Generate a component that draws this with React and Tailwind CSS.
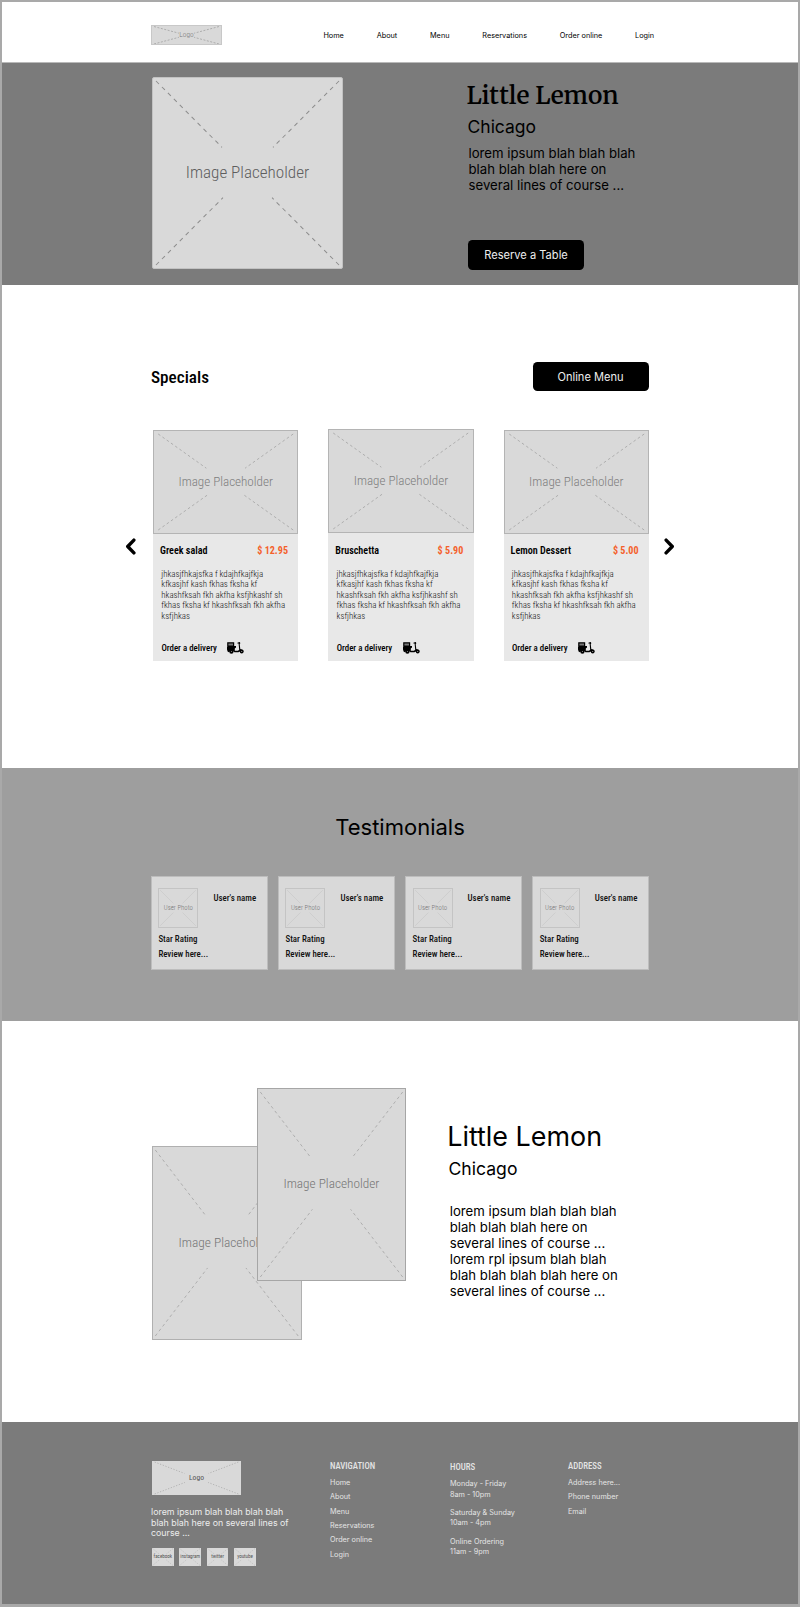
const NAV = ["Home", "About", "Menu", "Reservations", "Order online", "Login"];
const SPECIALS = [
  { name: "Greek salad", price: "$ 12.95", offset: "mt-px h-[231px]", head: "mt-[11px]" },
  { name: "Bruschetta", price: "$ 5.90", offset: "h-[232px]", head: "mt-[12px]" },
  { name: "Lemon Dessert", price: "$ 5.00", offset: "mt-px h-[231px]", head: "mt-[11px]" },
];
const DESCRIPTION = [
  "jhkasjfhkajsfka f kdajhfkajfkja",
  "kfkasjhf kash fkhas fksha kf",
  "hkashfksah fkh akfha ksfjhkashf sh",
  "fkhas fksha kf hkashfksah fkh akfha",
  "ksfjhkas",
];
const HOURS = [
  ["Monday - Friday", "8am - 10pm"],
  ["Saturday & Sunday", "10am - 4pm"],
  ["Online Ordering", "11am - 9pm"],
];

/* Grey box with dashed diagonals that break around a centred label. */
function Placeholder({ label, w, h, className = "", text = "", stroke = "#a2a2a2", dash = "3 3", from = 0.365, to = 0.63, sw = 0.8 }) {
  const i = Math.min(3, h * 0.03);
  const x = i * (w / h);
  return (
    <div className={`grid shrink-0 place-items-center overflow-hidden bg-[#d9d9d9] ${className}`}>
      <svg viewBox={`0 0 ${w} ${h}`} preserveAspectRatio="none" className="col-start-1 row-start-1 h-full w-full" fill="none" stroke={stroke} strokeWidth={sw} strokeDasharray={dash}>
        <path d={`M${x} ${i}L${w * from} ${h * from}M${w - x} ${i}L${w * (1 - from)} ${h * from}M${x} ${h - i}L${w * (1 - to)} ${h * to}M${w - x} ${h - i}L${w * to} ${h * to}`} />
      </svg>
      <span className={`z-10 col-start-1 row-start-1 whitespace-nowrap font-['Roboto',sans-serif] font-stretch-condensed ${text}`}>{label}</span>
    </div>
  );
}

function Button({ children, className = "" }) {
  return (
    <button className={`flex h-[29.5px] w-[116px] items-center justify-center rounded-[4.5px] bg-black text-[11.1px] leading-none text-[#eeeeee] ${className}`}>
      {children}
    </button>
  );
}

function Arrow({ className }) {
  return (
    <svg viewBox="0 0 10 16" className={`h-[17px] w-[11px] shrink-0 ${className}`} fill="none" stroke="#000" strokeWidth="3.2" strokeLinejoin="round" strokeLinecap="round">
      <path d="M8.2 2L2.4 8L8.2 14" />
    </svg>
  );
}

function Scooter() {
  return (
    <svg viewBox="0 0 17 12" className="h-3 w-[17px]">
      <path d="M.8 .8H6.6V4H.8Z" fill="#777" stroke="#000" strokeWidth="1.2" />
      <path d="M0 5.2Q0 4 1.2 4H9V5.6L7.8 6.4V8.8H11L12.2 7.8L11.6 1.4L10.4 1.6V.8L12.4 0Q13.2 0 13.2 1V1.8L12.7 2L13.3 7Q16 7.2 16.8 9.2L13 9.4L11.4 10.2H7.4L6.6 9.2H2.6L1.6 10.2L.6 9.4L0 7.6Z" />
      <circle cx="4.4" cy="9.5" r="2.2" />
      <circle cx="14.7" cy="9.5" r="1.9" />
      <circle cx="4.4" cy="9.5" r=".5" fill="#aaa" />
      <circle cx="14.7" cy="9.5" r=".6" fill="#aaa" />
    </svg>
  );
}

function SpecialCard({ name, price, offset, head }) {
  return (
    <article className={`w-[145.4px] bg-[#e8e8e8] font-['Roboto',sans-serif] font-stretch-condensed ${offset}`}>
      <Placeholder label="Image Placeholder" w={143} h={102} dash="2.6 2.6" className="h-[104px] w-full border border-[#b4b4b4]" text="text-[13.1px] font-light text-[#7d7d7d]" />
      <div className={`flex justify-between pr-[10.4px] pl-[7px] text-[10.1px] leading-3 font-semibold ${head}`}>
        <h3>{name}</h3>
        <span className="font-bold text-[#f4612c]">{price}</span>
      </div>
      <p className="mt-[11.5px] pl-[8.3px] text-[8.9px] leading-[10.5px] font-light whitespace-nowrap text-[#111111]">
        {DESCRIPTION.map((line) => <span key={line} className="block">{line}</span>)}
      </p>
      <div className="mt-[21px] flex items-center gap-[10.5px] pl-[8.4px] text-[8.9px] leading-3 font-medium">
        <span>Order a delivery</span>
        <Scooter />
      </div>
    </article>
  );
}

function Review() {
  return (
    <article className="h-[93.5px] w-[116.6px] border border-[#bdbdbd] bg-[#d9d9d9] pt-[11px] pl-[6.4px] font-['Roboto',sans-serif] text-[8.9px] leading-3 font-medium font-stretch-condensed text-[#111111]">
      <div className="flex">
        <Placeholder label="User Photo" w={38} h={38} from={0.38} to={0.62} dash="none" stroke="#cccccc" className="size-10 border border-[#c4c4c4]" text="text-[6.8px] font-light text-[#777777]" />
        <span className="ml-[15px] pt-[3.5px]">User's name</span>
      </div>
      <p className="mt-[5px]">Star Rating</p>
      <p className="mt-[3px]">Review here...</p>
    </article>
  );
}

function FooterTitle({ children }) {
  return <h3 className="text-[8.8px] leading-3 font-medium font-['Roboto',sans-serif] font-stretch-condensed">{children}</h3>;
}

export default function App() {
  return (
    <div className="flex h-[1607px] w-[800px] flex-col border-2 border-b-3 border-[#a9a9a9] bg-white font-['Inter',sans-serif] text-black">
      <header className="flex h-[61px] shrink-0 border-b border-[#b9b9b9] pl-[149px]">
        <Placeholder label="Logo" w={69} h={18} from={0.39} to={0.61} dash="2 1.5" className="mt-[22.5px] h-[20.5px] w-[71px] border border-[#c8c8c8]" text="text-[7.4px] leading-none font-light text-[#777777]" />
        <nav className="mt-[27.6px] ml-[101.4px] flex gap-[32.8px] text-[7.3px] leading-3">
          {NAV.map((item) => <a key={item}>{item}</a>)}
        </nav>
      </header>

      <section className="flex h-[222px] shrink-0 bg-[#7b7b7b] pl-[150px]">
        <Placeholder label="Image Placeholder" w={189} h={189} dash="4.2 4.2" stroke="#8c8c8c" sw={1} className="mt-[14px] h-[192px] w-[191px] rounded-xs border border-[#c2c2c2]" text="text-[17.1px] font-light text-[#5e5e5e]" />
        <div className="ml-[123.5px]">
          <h1 className="mt-[20px] text-[24.4px] leading-[26px] font-semibold font-['Merriweather',serif]">Little Lemon</h1>
          <h2 className="mt-[6.8px] pl-px text-[17.5px] leading-[22px]">Chicago</h2>
          <p className="mt-[7px] pl-[2px] text-[13.2px] leading-4">
            lorem ipsum blah blah blah<br />blah blah blah here on<br />several lines of course ...
          </p>
          <Button className="mt-[47.3px] ml-[1.5px] pt-[1.5px]">Reserve a Table</Button>
        </div>
      </section>

      <section className="h-[482.5px] shrink-0 pt-[76.5px]">
        <div className="flex items-center justify-between pr-[149.5px] pl-[149px]">
          <h2 className="pt-px text-[17.2px] leading-5 font-medium font-['Roboto',sans-serif] font-stretch-condensed">Specials</h2>
          <Button className="pt-[3px]">Online Menu</Button>
        </div>
        <div className="mt-[38px] flex items-start pl-[123px]">
          <Arrow className="mt-[108.6px] mr-[17px]" />
          <div className="flex items-start gap-[29.9px]">
            {SPECIALS.map((s) => <SpecialCard key={s.name} {...s} />)}
          </div>
          <Arrow className="mt-[108.6px] ml-[15px] -scale-x-100" />
        </div>
      </section>

      <section className="h-[253px] shrink-0 bg-[#9e9e9e] pt-[45.5px]">
        <h2 className="text-center text-[22px] leading-7">Testimonials</h2>
        <div className="mt-[35px] flex gap-[10.5px] pl-[149px]">
          {[0, 1, 2, 3].map((n) => <Review key={n} />)}
        </div>
      </section>

      <section className="flex h-[401px] shrink-0 pl-[150px]">
        <div className="mt-[67px] flex h-[252px] w-[254px] items-start">
          <Placeholder label="Image Placeholder" w={147} h={192} dash="3 3" from={0.36} className="mt-[58.5px] h-[194px] w-[149.5px] border border-[#b0b0b0]" text="text-[13.4px] font-light text-[#757575]" />
          <Placeholder label="Image Placeholder" w={147} h={192} dash="3 3" from={0.36} className="z-10 -ml-[44.6px] h-[193px] w-[149px] border border-[#a6a6a6]" text="text-[13.3px] font-light text-[#757575]" />
        </div>
        <div className="ml-[41.2px] pt-[99px]">
          <h2 className="text-[26.9px] leading-8">Little Lemon</h2>
          <h3 className="mt-[6.6px] pl-[1.3px] text-[17.6px] leading-[22px]">Chicago</h3>
          <p className="mt-[23px] pl-[2.5px] text-[13.2px] leading-4">
            lorem ipsum blah blah blah<br />blah blah blah here on<br />several lines of course ...<br />
            lorem rpl ipsum blah blah<br />blah blah blah blah here on<br />several lines of course ...
          </p>
        </div>
      </section>

      <footer className="flex grow bg-[#7b7b7b] pt-[38px] pl-[149px] text-[7.25px] leading-[10.5px] text-[#e4e4e4]">
        <div className="w-[179px]">
          <Placeholder label="Logo" w={87} h={33} dash="1.2 1.6" stroke="#aaaaaa" className="mt-[1px] ml-px h-[34px] w-[89px]" text="pt-px text-[7.6px] leading-none text-[#555555]" />
          <p className="mt-[12.8px] text-[8.85px] leading-[10.6px] text-[#ececec]">
            lorem ipsum blah blah blah blah<br />blah blah here on several lines of<br />course ...
          </p>
          <div className="mt-[8.8px] ml-px flex gap-[5.8px]">
            {["facebook", "instagram", "twitter", "youtube"].map((s) => (
              <Placeholder key={s} label={s} w={22} h={18} dash="1 1.5" stroke="#b5b5b5" className="h-[18px] w-[21.6px]" text="text-[5px] leading-none text-[#555555]" />
            ))}
          </div>
        </div>
        <div className="w-[120px]">
          <FooterTitle>NAVIGATION</FooterTitle>
          <ul className="mt-[4.6px] leading-[14.35px]">
            {NAV.map((item) => <li key={item}>{item}</li>)}
          </ul>
        </div>
        <div className="w-[118px] pt-px">
          <FooterTitle>HOURS</FooterTitle>
          <div className="mt-[6.6px] flex flex-col gap-[7.8px]">
            {HOURS.map(([days, time]) => (
              <p key={days}>{days}<br />{time}</p>
            ))}
          </div>
        </div>
        <div>
          <FooterTitle>ADDRESS</FooterTitle>
          <ul className="mt-[4.6px] leading-[14.35px]">
            <li>Address here...</li>
            <li>Phone number</li>
            <li>Email</li>
          </ul>
        </div>
      </footer>
    </div>
  );
}
